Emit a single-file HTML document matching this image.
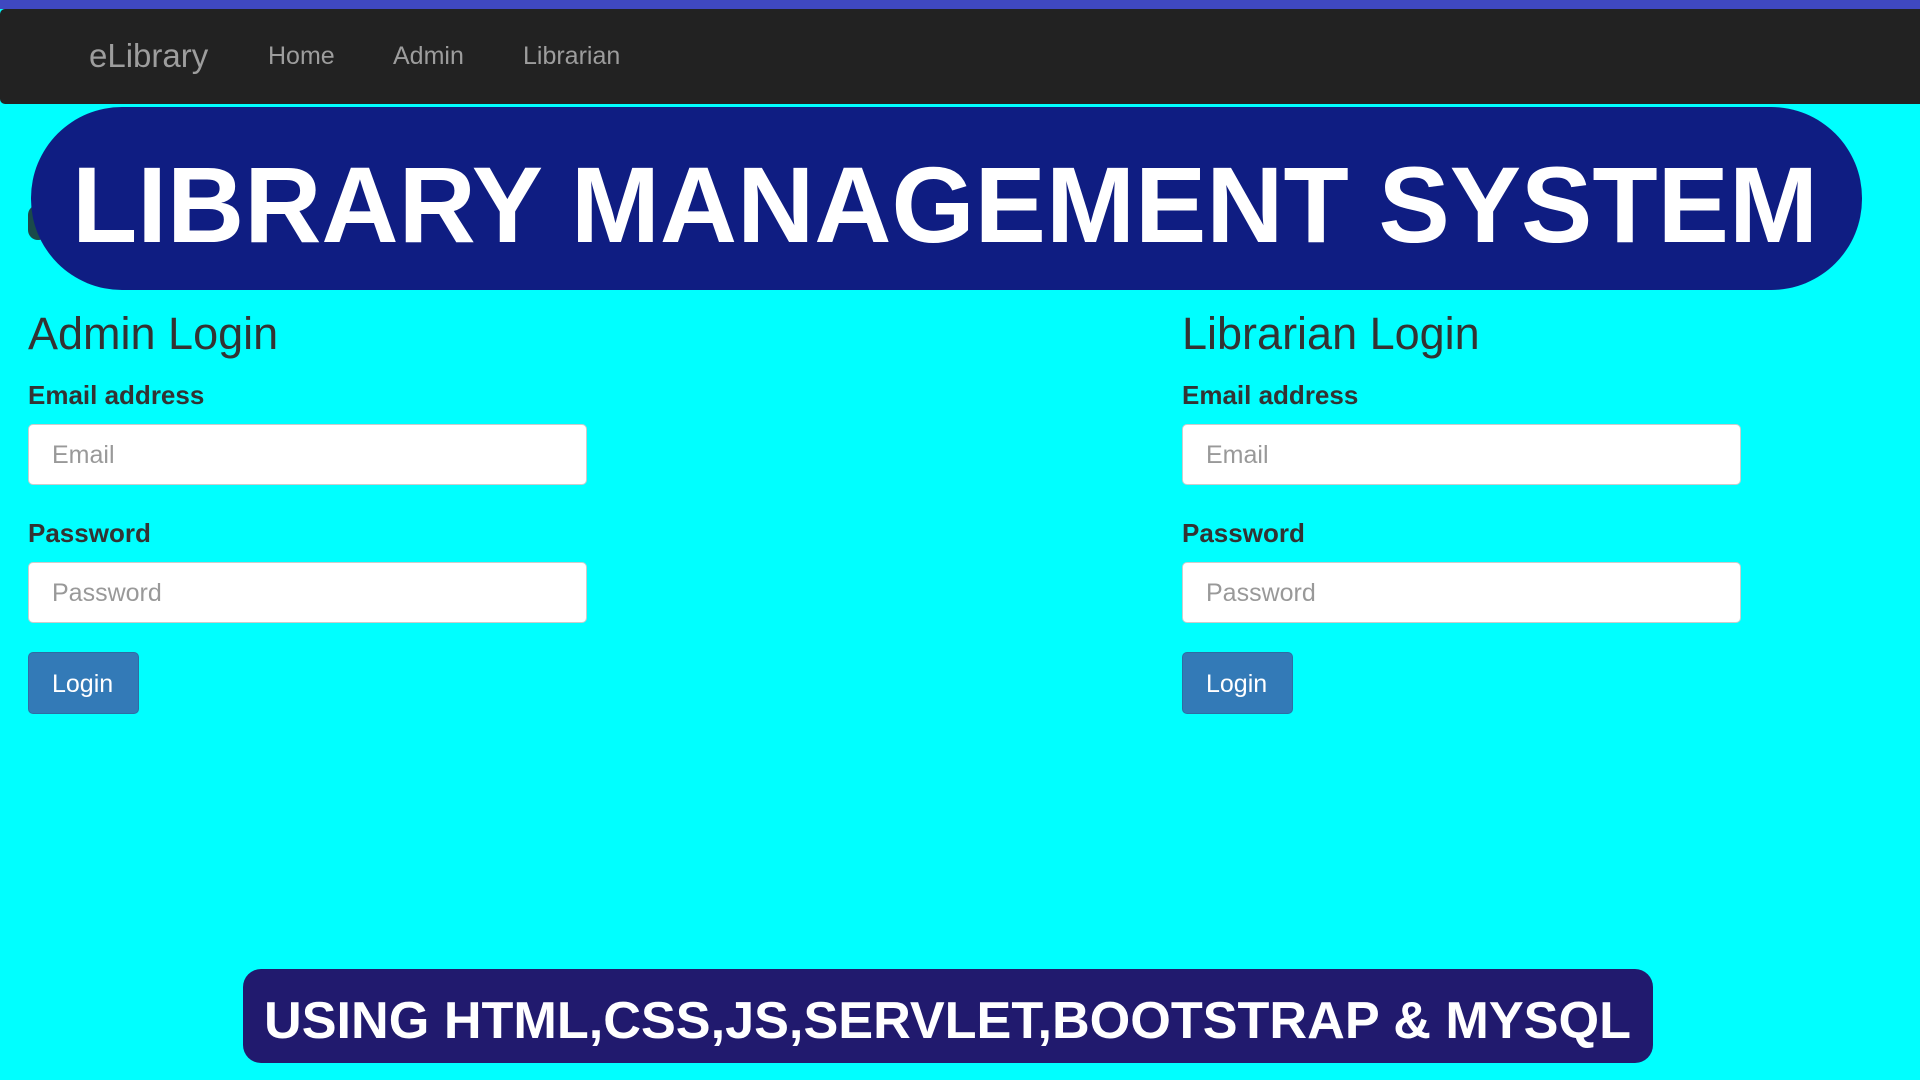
<!DOCTYPE html>
<html><head><meta charset="utf-8"><style>
*{margin:0;padding:0;box-sizing:border-box}
body{width:1920px;height:1080px;background:#00ffff;position:relative;overflow:hidden;font-family:"Liberation Sans",Arial,sans-serif}
.strip{position:absolute;left:0;top:0;width:1920px;height:9px;background:#3f48c0}
.nav{position:absolute;left:0;top:9px;width:1920px;height:95px;background:#222;border-radius:5px 0 0 5px}
.nav span{position:absolute;color:#9d9d9d;font-size:25px;top:33px}
.nav .brand{font-size:33px;top:28px;left:89px}
.abs{position:absolute}
h3{position:absolute;font-weight:normal;font-size:45px;color:#333}
label{position:absolute;font-weight:bold;font-size:26px;color:#333}
.inp{position:absolute;width:559px;height:61px;background:#fff;border-radius:5px;border:1px solid #ccc;color:#999;font-size:25px;padding:16px 0 0 23px}
.btn{position:absolute;width:111px;height:62px;background:#337ab7;border-radius:5px;color:#fff;font-size:25px;padding:17px 0 0 23px;border:1px solid #2e6da4}
</style></head><body>
<div class="strip"></div>
<div class="nav">
<span class="brand">eLibrary</span>
<span style="left:268px">Home</span>
<span style="left:393px">Admin</span>
<span style="left:523px">Librarian</span>
</div>
<div class="abs" style="left:28px;top:205px;width:20px;height:35px;background:#1a4a4a;border-radius:10px"></div>
<svg class="abs" style="left:0;top:0" width="1920" height="1080">
<rect x="31" y="107" width="1831" height="183" rx="91" fill="#0f1d82"/>
<text x="72" y="242" font-family="Liberation Sans" font-weight="bold" font-size="108" fill="#fff" textLength="1746" lengthAdjust="spacingAndGlyphs">LIBRARY MANAGEMENT SYSTEM</text>
<rect x="243" y="969" width="1410" height="94" rx="18" fill="#211a6e"/>
<text x="264" y="1038" font-family="Liberation Sans" font-weight="bold" font-size="52" fill="#fff" textLength="1367" lengthAdjust="spacingAndGlyphs">USING HTML,CSS,JS,SERVLET,BOOTSTRAP &amp; MYSQL</text>
</svg>

<h3 style="left:28px;top:308px">Admin Login</h3>
<label style="left:28px;top:380px">Email address</label>
<div class="inp" style="left:28px;top:424px">Email</div>
<label style="left:28px;top:518px">Password</label>
<div class="inp" style="left:28px;top:562px">Password</div>
<div class="btn" style="left:28px;top:652px">Login</div>

<h3 style="left:1182px;top:308px">Librarian Login</h3>
<label style="left:1182px;top:380px">Email address</label>
<div class="inp" style="left:1182px;top:424px">Email</div>
<label style="left:1182px;top:518px">Password</label>
<div class="inp" style="left:1182px;top:562px">Password</div>
<div class="btn" style="left:1182px;top:652px">Login</div>
</body></html>
